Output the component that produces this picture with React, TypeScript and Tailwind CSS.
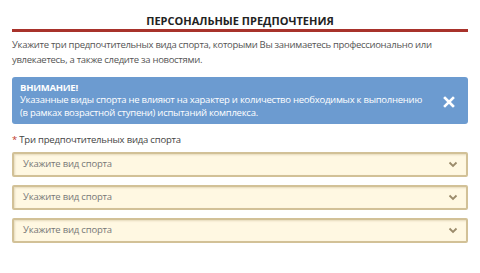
export default function App() {
  const selects = [0, 1, 2]

  return (
    <div className="w-[480px] h-[273px] bg-white px-3 pt-[14px]" style={{ fontFamily: '"Open Sans", "Liberation Sans", sans-serif' }}>
      {/* Title */}
      <div className="border-b-[3px] border-[#a8322b] pb-[1px]">
        <h1 className="text-center text-[11px] font-bold leading-[14px] text-[#222]">ПЕРСОНАЛЬНЫЕ ПРЕДПОЧТЕНИЯ</h1>
      </div>

      <p className="mt-[5px] text-[9.5px] leading-[15px] tracking-[-0.3px] text-[#555]">
        Укажите три предпочтительных вида спорта, которыми Вы занимаетесь профессионально или
        увлекаетесь, а также следите за новостями.
      </p>

      {/* Alert */}
      <div className="mt-[10px] flex h-[47px] items-center rounded-[3px] bg-[#6c9bd0] pl-[8px] pr-[13px] text-white">
        <div className="flex-1 text-[9.5px] leading-[12.5px] tracking-[-0.25px]">
          <div className="font-bold">ВНИМАНИЕ!</div>
          <div>Указанные виды спорта не влияют на характер и количество необходимых к выполнению</div>
          <div>(в рамках возрастной ступени) испытаний комплекса.</div>
        </div>
        <svg width="12" height="12" viewBox="0 0 12 12" className="mt-[3px]">
          <path d="M2 2 L10 10 M10 2 L2 10" stroke="white" strokeWidth="2.6" strokeLinecap="square" />
        </svg>
      </div>

      {/* Sports */}
      <div className="mt-[10px] text-[9.5px] leading-[12px] tracking-[-0.2px] text-[#444]">
        <span className="text-[#c0392b]">*</span> Три предпочтительных вида спорта
      </div>

      <div className="mt-[6px] flex flex-col gap-[8px]">
        {selects.map((i) => (
          <div
            key={i}
            className="flex h-[25px] items-center justify-between rounded-[2px] border-2 border-[#d2c197] bg-[#fff8e2] pl-[9px] pr-[8px] shadow-[inset_1px_1px_2px_rgba(150,130,80,0.25)]"
          >
            <span className="text-[9.5px] tracking-[-0.2px] text-[#777]">Укажите вид спорта</span>
            <svg width="10" height="7" viewBox="0 0 10 7">
              <path d="M1.5 1.5 L5 5 L8.5 1.5" fill="none" stroke="#9b8b6b" strokeWidth="1.8" />
            </svg>
          </div>
        ))}
      </div>
    </div>
  )
}
